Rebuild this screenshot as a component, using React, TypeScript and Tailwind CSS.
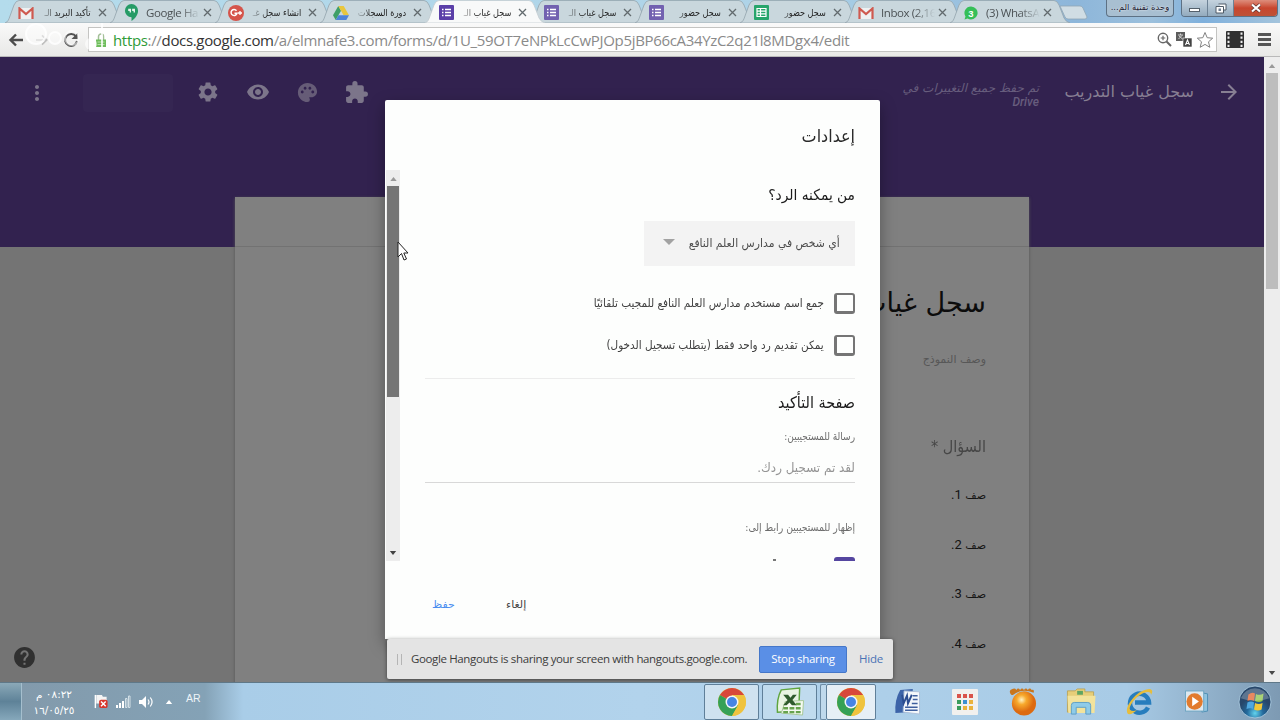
import type { ReactNode } from "react";
import {
  MdArrowForward,
  MdExtension,
  MdHelp,
  MdMoreVert,
  MdPalette,
  MdSettings,
  MdVisibility,
} from "react-icons/md";

interface TabItem {
  title: string;
  icon: ReactNode;
  rtl?: boolean;
  active?: boolean;
}

const GmailIcon = () => (
  <svg viewBox="0 0 16 12" className="h-3 w-4">
    <path d="M1 1h14v11H1z" fill="#eef1f2" />
    <path d="M1.5 12V1.5L8 7l6.5-5.5V12" fill="none" stroke="#cf5a50" strokeWidth="2.2" />
  </svg>
);

const HangoutsIcon = () => (
  <svg viewBox="0 0 16 18" className="h-[17px] w-[15px]">
    <path d="M8 0a7 7 0 0 1 7 7c0 5-4 9-7 11v-4A7 7 0 0 1 8 0z" fill="#269b66" />
    <path d="M4.5 5h3v4H6V7.500H4.500zM8.700 5h3v4h-1.500V7.500H8.700z" fill="#e8f5ee" />
  </svg>
);

const PlusIcon = () => (
  <svg viewBox="0 0 16 16" className="h-4 w-4">
    <circle cx="8" cy="8" r="8" fill="#d5544a" />
    <path d="M8.500 5.700A3 3 0 1 0 9 8.300H6.500" fill="none" stroke="#fff" strokeWidth="1.500" />
    <path d="M12 6v4M10 8h4" stroke="#fff" strokeWidth="1.300" />
  </svg>
);

const DriveIcon = () => (
  <svg viewBox="0 0 16 14" className="h-[14px] w-4">
    <path d="M5.300 0 0 9.300 2.700 14 8 4.700z" fill="#3f9f68" />
    <path d="M5.300 0h5.400L16 9.300h-5.400z" fill="#e9c63c" />
    <path d="M5.400 9.300H16L13.300 14H2.700z" fill="#4e83d8" />
  </svg>
);

const FormIcon = ({ active }: { active?: boolean }) => (
  <svg viewBox="0 0 15 15" className="h-[15px] w-[15px]">
    <rect width="15" height="15" rx="1" fill={active ? "#5b3fa8" : "#7261b0"} />
    <path d="M3 4.500h1.500M3 7.500h1.500M3 10.500h1.500M6 4.500h6M6 7.500h6M6 10.500h6" stroke="#fff" strokeWidth="1.500" />
  </svg>
);

const SheetIcon = () => (
  <svg viewBox="0 0 15 15" className="h-[15px] w-[15px]">
    <rect width="15" height="15" rx="1" fill="#27a56b" />
    <path d="M3 3.500h9v8H3zM3 6.200h9M3 8.900h9M6.500 3.500v8" fill="none" stroke="#fff" strokeWidth="1.200" />
  </svg>
);

const WhatsIcon = () => (
  <svg viewBox="0 0 14 14" className="h-[14px] w-[14px]">
    <path d="M7 .5A6.500 6.500 0 1 1 3.600 12.500L.5 13.500l1-3A6.500 6.500 0 0 1 7 .5z" fill="#35bf58" />
    <text x="7" y="10.500" textAnchor="middle" fontSize="9.500" fontWeight="700" fill="#fff" fontFamily="Liberation Sans">3</text>
  </svg>
);

const tabs: TabItem[] = [
  { title: "تأكيد البريد الـ", icon: <GmailIcon />, rtl: true },
  { title: "Google Ha", icon: <HangoutsIcon /> },
  { title: "انشاء سجل غـ", icon: <PlusIcon />, rtl: true },
  { title: "دورة السجلات", icon: <DriveIcon />, rtl: true },
  { title: "سجل غياب الـ", icon: <FormIcon active />, rtl: true, active: true },
  { title: "سجل غياب الـ", icon: <FormIcon />, rtl: true },
  { title: "سجل حضور", icon: <FormIcon />, rtl: true },
  { title: "سجل حضور", icon: <SheetIcon />, rtl: true },
  { title: "Inbox (2,16", icon: <GmailIcon /> },
  { title: "(3) WhatsA", icon: <WhatsIcon /> },
];

const Tab = ({ title, icon, rtl, active }: TabItem) => (
  <div className={active ? "relative z-10 h-[23px] w-[105px] shrink-0" : "relative h-[23px] w-[105px] shrink-0"}>
    <svg viewBox="0 0 120 23" className="absolute top-0 left-0 h-[23px] w-[120px]">
      <path
        d="M0 23C3 22 4 19 5 16L9 5Q11 .5 14 .5H104Q107 .5 109 5L114 18Q116 22 120 23z"
        fill={active ? "#f8f9f9" : "#c9d7dd"}
        stroke={active ? "#c3ccd0" : "#94a5ad"}
        strokeWidth="0.8"
      />
    </svg>
    <div className="relative flex h-[23px] items-center pt-[2px] pl-[13px]">
      <span className="flex w-4 shrink-0 justify-center">{icon}</span>
      {rtl ? (
        <div
          dir="rtl"
          className="ml-[5px] w-[52px] font-['DejaVu_Sans'] text-[9.500px] leading-[18px] whitespace-nowrap text-[#1d1d1d] [mask-image:linear-gradient(to_right,transparent,black_18px)]"
        >
          <div className="w-max origin-right scale-x-[0.86] font-medium">{title}</div>
        </div>
      ) : (
        <div className="ml-[7px] w-[54px] font-['Open_Sans'] text-[11.500px] leading-[18px] tracking-[-0.400px] whitespace-nowrap text-[#4c5255] [mask-image:linear-gradient(to_left,transparent,black_20px)]">
          {title}
        </div>
      )}
      <svg viewBox="0 0 9 9" className={rtl ? "ml-[7px] h-[9px] w-[9px] shrink-0" : "ml-[3px] h-[9px] w-[9px] shrink-0"}>
        <path d="M1 1l7 7M8 1L1 8" stroke="#626a6e" strokeWidth="1.300" />
      </svg>
    </div>
  </div>
);

const TabStrip = () => (
  <div className="relative flex h-[23px] bg-[linear-gradient(to_right,#b4dcec_0%,#aed3e8_60%,#8db6da_84%,#9cc0dc_90%,#7fb0dc_94%,#a4c4dc_100%)] pl-[5px]">
    {tabs.map((t, i) => (
      <Tab key={i} {...t} />
    ))}
    <svg viewBox="0 0 30 15" className="relative mt-[5px] ml-[4px] h-[15px] w-[30px] shrink-0">
      <path d="M1 1h20q2 0 3 2l4 9q0 2-2 2H9q-2 0-3-2z" fill="#d0dde4" stroke="#8fa6b5" strokeWidth="0.8" />
    </svg>
    <div className="ml-[17px] flex">
      <div
        dir="rtl"
        className="h-[17px] w-[68px] rounded-b-[4px] border border-t-0 border-[#5d7184] bg-[#a8bfd1] text-center font-['DejaVu_Sans'] text-[8.500px] leading-[15px] whitespace-nowrap text-[#223] text-shadow-[0_0_2px_white]"
      >
        وحدة تقنية الم...
      </div>
      <div className="ml-[7px] flex h-[17px] overflow-hidden rounded-b-[4px] border border-t-0 border-[#5d7184]">
        <div className="flex w-[26px] items-center justify-center border-r border-[#6d8295] bg-linear-to-b from-[#c5d3de] to-[#93abbe]">
          <div className="mt-[3px] h-[4px] w-[11px] border border-[#54606b] bg-white" />
        </div>
        <div className="flex w-[26px] items-center justify-center border-r border-[#6d8295] bg-linear-to-b from-[#c5d3de] to-[#93abbe]">
          <svg viewBox="0 0 12 11" className="h-[11px] w-3">
            <path d="M3.500 1h7.500v6H9M1 3.500h7.500V10H1z" fill="#fff" stroke="#4e5a66" />
            <rect x="3.500" y="5.500" width="2.500" height="2.500" fill="#6f8092" />
          </svg>
        </div>
        <div className="flex w-[43px] items-center justify-center bg-linear-to-b from-[#dd8d7c] via-[#c8452e] to-[#bd5236]">
          <svg viewBox="0 0 12 10" className="h-[10px] w-3">
            <path d="M2 1.500l8 7M10 1.500l-8 7" stroke="#5e3430" strokeWidth="3.600" />
            <path d="M2 1.500l8 7M10 1.500l-8 7" stroke="#fff" strokeWidth="2.200" />
          </svg>
        </div>
      </div>
    </div>
  </div>
);

const Toolbar = () => (
  <div className="relative flex h-[34px] items-center border-b border-[#b9b9b9] bg-linear-to-b from-[#f9f9f9] to-[#e9e9e7]">
    <svg viewBox="0 0 16 14" className="ml-[8px] h-[14px] w-4">
      <path d="M15 7H3M8 1.500 2.500 7 8 12.500" fill="none" stroke="#4c4c4c" strokeWidth="2.400" />
    </svg>
    <svg viewBox="0 0 16 14" className="ml-[11px] h-[12px] w-[14px] opacity-40">
      <path d="M1 7h12M8 1.500 13.500 7 8 12.500" fill="none" stroke="#777" strokeWidth="2" />
    </svg>
    <svg viewBox="0 0 16 16" className="ml-[14px] h-4 w-4">
      <path d="M13 4.500A6 6 0 1 0 14 9" fill="none" stroke="#555" strokeWidth="2" />
      <path d="M14.500 1v6h-6z" fill="#555" />
    </svg>
    <div className="ml-[9px] flex h-[25px] w-[1129px] shrink-0 items-center border border-[#c4c4c2] bg-white">
      <svg viewBox="0 0 10 14" className="ml-[7px] h-[14px] w-[10px]">
        <path d="M2.500 7V3.500a2.500 2.500 0 0 1 5 0V7" fill="none" stroke="#a3bf98" strokeWidth="1.500" />
        <rect y="6.500" width="10" height="7.500" fill="#6fbd5d" />
        <path d="M1.500 9h7M1.500 11.500h7" stroke="#b8e3ab" />
      </svg>
      <div className="ml-[7px] w-[760px] font-['Open_Sans'] text-[15px] leading-[22px] tracking-[-0.330px] whitespace-nowrap text-[#8a8a8a]">
        <span className="text-[#2e9b36]">https</span>://<span className="text-[#333]">docs.google.com</span>
        /a/elmnafe3.com/forms/d/1U_59OT7eNPkLcCwPJOp5jBP66cA34YzC2q21l8MDgx4/edit
      </div>
      <div className="mr-[2px] ml-auto flex items-center gap-[4px]">
        <svg viewBox="0 0 15 15" className="h-[15px] w-[15px]">
          <circle cx="6" cy="6" r="4.700" fill="none" stroke="#666" strokeWidth="1.400" />
          <path d="M9.500 9.500 14 14" stroke="#666" strokeWidth="2" />
          <path d="M3.700 6h4.600M6 3.700v4.600" stroke="#666" strokeWidth="1.200" />
        </svg>
        <svg viewBox="0 0 16 15" className="h-[15px] w-4">
          <rect width="9" height="9" fill="#5d5d5d" />
          <path d="M2 3h5M4.500 1.500V3M6 3.500 2.500 7M3 4l3.500 3" fill="none" stroke="#ddd" strokeWidth="0.900" />
          <rect x="7" y="6" width="9" height="9" fill="#444" stroke="#fff" strokeWidth="0.600" />
          <path d="M9.500 13 11.500 8l2 5M10.300 11.500h2.500" fill="none" stroke="#fff" strokeWidth="1.100" />
        </svg>
        <svg viewBox="0 0 18 18" className="h-[18px] w-[18px]">
          <path d="m9 1.500 2.200 5.200 5.500.5-4.200 3.600 1.300 5.500L9 13.400l-4.800 2.900 1.300-5.500L1.300 7.200l5.500-.5z" fill="#fff" stroke="#828282" />
        </svg>
      </div>
    </div>
    <svg viewBox="0 0 18 17" className="ml-[9px] h-[17px] w-[18px]">
      <rect width="18" height="17" rx="1" fill="#303030" />
      <path d="M2.500 1.500v15M15.500 1.500v15" stroke="#eee" strokeWidth="2" strokeDasharray="2.200 1.900" />
    </svg>
    <div className="ml-[14px] flex w-[13px] flex-col gap-[2px]">
      <div className="h-[3px] bg-[#555]" />
      <div className="h-[3px] bg-[#555]" />
      <div className="h-[3px] bg-[#555]" />
    </div>
    {/* faded white recording mark over the navigation buttons */}
    <svg viewBox="0 0 82 30" className="absolute top-0 left-[25px] h-[30px] w-[82px]">
      <circle cx="11" cy="11" r="10" fill="#fff" fillOpacity="0.450" stroke="#fff" strokeOpacity="0.800" strokeWidth="2" />
      <circle cx="30" cy="15" r="6" fill="#fff" fillOpacity="0.400" stroke="#fff" strokeOpacity="0.800" strokeWidth="2" />
      <circle cx="47" cy="15" r="7" fill="none" stroke="#fff" strokeOpacity="0.500" strokeWidth="2" />
      <circle cx="66" cy="21" r="6" fill="#fff" fillOpacity="0.600" />
      <path d="M77 0v24" stroke="#fff" strokeOpacity="0.800" strokeWidth="2" />
    </svg>
  </div>
);

const rows = [1, 2, 3, 4];

const FormPage = () => (
  <div className="flex h-[625px] w-[1264px] flex-col overflow-hidden bg-[#747474]">
    <div className="h-[190px] shrink-0 bg-[#32224f]">
      <div className="flex h-[70px] items-center text-[#7c758a]">
        <MdMoreVert className="mt-px ml-[25px] h-6 w-6" />
        <div className="mt-px ml-[34px] h-[38px] w-[90px] rounded-sm bg-[#352652]" />
        <MdSettings className="ml-[23px] h-6 w-6" />
        <MdVisibility className="ml-[26px] h-6 w-6" />
        <MdPalette className="mt-px ml-[26px] h-[23px] w-[23px] text-[#665c77]" />
        <MdExtension className="mt-px ml-[25px] h-[25px] w-[25px]" />
        <div dir="rtl" className="mt-[5px] ml-auto w-[160px] font-['DejaVu_Sans'] text-[12px] leading-[14px] text-[#675d7d] italic">
          <div className="whitespace-nowrap">تم حفظ جميع التغييرات في</div>
          <div className="font-['Roboto'] text-[12px] leading-[14px] font-medium">Drive</div>
        </div>
        <div dir="rtl" className="ml-[15px] w-[140px] font-['DejaVu_Sans'] text-[16px] leading-6 whitespace-nowrap text-[#877f93]">
          سجل غياب التدريب
        </div>
        <MdArrowForward className="mr-[23px] ml-[23px] h-6 w-6 text-[#877f93]" />
      </div>
    </div>
    <div className="relative -mt-[50px] ml-[235px] h-[490px] w-[794px] shrink-0 bg-[#808080] shadow-[0_1px_3px_#555]">
      <div className="h-[50px] border-b border-[#727272]" />
      <div dir="rtl" className="flex flex-col pr-[43px] font-['DejaVu_Sans']">
        <div className="mt-[28px] h-[60px] text-[27px] leading-[56px] text-[#0c0c0c]">سجل غياب</div>
        <div className="mt-[15px] h-5 text-[11px] leading-5 text-[#575757]">وصف النموذج</div>
        <div className="mt-[62px] h-[30px] origin-right scale-x-[0.9] text-[16px] leading-[30px] text-[#464646]">السؤال *</div>
        <div className="mt-[8px] text-[11px] text-[#141414]">
          {rows.map((n) => (
            <div key={n} className="h-[49.500px] leading-[49.500px]">
              صف <span className="font-['Roboto'] text-[13px]">{n}.</span>
            </div>
          ))}
        </div>
      </div>
    </div>
    <MdHelp className="absolute top-[588px] left-[12px] h-[25px] w-[25px] text-[#303030]" />
  </div>
);

const PageScrollbar = () => (
  <div className="flex w-4 flex-col items-center bg-[#ededed]">
    <svg viewBox="0 0 8 5" className="mt-[7px] h-[4px] w-[8px]">
      <path d="M0 5 4 0l4 5z" fill="#999" />
    </svg>
    <div className="mt-[5px] h-[216px] w-[12px] bg-[#bdbdbd]" />
    <svg viewBox="0 0 8 5" className="mt-auto mb-[7px] h-[4px] w-[8px]">
      <path d="M0 0h8L4 5z" fill="#4a4a4a" />
    </svg>
  </div>
);

const CheckRow = ({ label }: { label: string }) => (
  <div className="flex h-[42px] items-center">
    <div className="h-[21px] w-[21px] shrink-0 rounded-[3px] border-2 border-b-[3px] border-l-[3px] border-[#757575]" />
    <div className="mt-[2px] mr-[10px] w-max origin-right scale-x-[0.91] text-[11.500px] whitespace-nowrap text-[#404040]">{label}</div>
  </div>
);

const SettingsDialog = () => (
  <div className="absolute top-[43px] left-[385px] flex h-[539px] w-[495px] flex-col rounded-t-[2px] bg-[#fdfefd] font-['DejaVu_Sans'] shadow-[0_6px_16px_rgba(0,0,0,0.35)]">
    <div dir="rtl" className="mr-[25px] h-[70px] origin-right scale-x-[0.94] text-[17px] leading-[72px] text-[#2a2a2a]">
      إعدادات
    </div>
    <div className="flex h-[391px] overflow-hidden">
      <div className="ml-px flex w-[14px] flex-col items-center bg-[#ededed]">
        <svg viewBox="0 0 8 5" className="mt-[7px] h-[4px] w-[7px] shrink-0">
          <path d="M0 5 4 0l4 5z" fill="#999" />
        </svg>
        <div className="mt-[5px] h-[211px] w-[12px] shrink-0 bg-[#757575]" />
        <svg viewBox="0 0 8 5" className="mt-auto mb-[6px] h-[4px] w-[8px]">
          <path d="M0 0h8L4 5z" fill="#444" />
        </svg>
      </div>
      <div dir="rtl" className="mr-[25px] ml-[25px] flex-1">
        <div className="h-[51px] origin-right scale-x-[0.92] text-[15px] leading-[50px] text-[#1a1a1a]">من يمكنه الرد؟</div>
        <div className="flex h-[45px] w-[211px] items-center bg-[#f3f3f3] pr-[15px] text-[11.500px] text-[#4c4c4c]">
          <span className="w-max origin-right scale-x-[0.94] whitespace-nowrap">أي شخص في مدارس العلم النافع</span>
          <svg viewBox="0 0 12 6" className="mr-auto mb-[3px] ml-[19px] h-[6px] w-[12px] shrink-0">
            <path d="M0 0h12L6 6z" fill="#a2a2a2" />
          </svg>
        </div>
        <div className="mt-[16px] border-b border-[#ececec] pb-[12px]">
          <CheckRow label="جمع اسم مستخدم مدارس العلم النافع للمجيب تلقائيًا" />
          <CheckRow label="يمكن تقديم رد واحد فقط (يتطلب تسجيل الدخول)" />
        </div>
        <div className="h-[48px] origin-right scale-x-[0.9] text-[16px] leading-[48px] text-[#1a1a1a]">صفحة التأكيد</div>
        <div className="h-5 origin-right scale-x-[0.82] text-[11px] leading-5 text-[#6c6c6c]">رسالة للمستجيبين:</div>
        <div className="h-[36px] border-b border-[#d8d8d8] text-[13px] leading-[42px] text-[#959595]">
          <div className="origin-right scale-x-[0.92]">لقد تم تسجيل ردك.</div>
        </div>
        <div className="mt-[35px] h-5 origin-right scale-x-[0.85] text-[11px] leading-5 text-[#6c6c6c]">إظهار للمستجيبين رابط إلى:</div>
        <div className="mt-[19px] flex h-[21px]">
          <div className="h-[21px] w-[21px] rounded-[3px] bg-[#5546a0]" />
          <div className="mt-[2px] mr-[58px] h-[2px] w-[3px] bg-[#777]" />
        </div>
      </div>
    </div>
    <div dir="ltr" className="flex flex-1 pt-[34px] pl-[47px] text-[11px] leading-5">
      <span className="w-[74px] text-[#4a8df0]">حفظ</span>
      <span className="text-[#444]">إلغاء</span>
    </div>
  </div>
);

const ShareBar = () => (
  <div className="absolute top-[582px] left-[387px] flex h-[40px] w-[506px] items-center rounded-[2px] bg-[#e4e4e4] font-['Open_Sans'] text-[11.500px] whitespace-nowrap text-[#3c3c3c] shadow-[0_1px_4px_rgba(0,0,0,0.5)]">
    <div className="ml-[10px] h-[11px] w-[5px] shrink-0 border-x border-[#b5b5b5]" />
    <span className="ml-[9px] w-[348px] shrink-0 tracking-[-0.370px]">
      Google Hangouts is sharing your screen with hangouts.google.com.
    </span>
    <button className="h-[27px] w-[88px] shrink-0 rounded-[2px] border border-[#4577c9] bg-[#5a8fe6] pb-px tracking-[-0.300px] text-white">
      Stop sharing
    </button>
    <span className="ml-[12px] tracking-[-0.200px] text-[#4a73b5]">Hide</span>
  </div>
);

const Cursor = () => (
  <svg viewBox="0 0 12 20" className="absolute top-[184px] left-[397px] h-[20px] w-3">
    <path d="M1 1v15l3.500-3.500L7 19l2.500-1-2.700-6H11z" fill="#fff" stroke="#222" />
  </svg>
);

const ChromeIcon = () => (
  <svg viewBox="0 0 28 28" className="h-[28px] w-[28px]">
    <circle cx="14" cy="14" r="14" fill="#efc33e" />
    <path d="M14 14 1.900 7A14 14 0 0 1 26.100 7H14z" fill="#d8483a" />
    <path d="M14 14 1.900 7A14 14 0 0 0 14 28l6-10.500z" fill="#35a156" />
    <path d="M14 14V7h12.100A14 14 0 0 1 14 28l6-10.500z" fill="#efc33e" />
    <circle cx="14" cy="14" r="6.500" fill="#f4f6f8" />
    <circle cx="14" cy="14" r="5" fill="#4584e4" />
  </svg>
);

const ExcelIcon = () => (
  <svg viewBox="0 0 30 30" className="h-[29px] w-[30px]">
    <path d="M6 3 25 1l-1 24-22 1Q1 12 6 3z" fill="#e9f4e2" stroke="#5fa53f" strokeWidth="1.500" />
    <path d="m10 15 19-1-1 15-22-2z" fill="#f5faf1" stroke="#a5c795" />
    <path d="M8 8h5l2.500 3L18 8h4l-4.500 5.500L22 19h-5l-2.500-3-3 3H8l4.500-5.500z" fill="#2f5b2c" />
    <path d="M8 22h19M8 26h19M21 17.500h6" stroke="#67a34d" strokeWidth="2.500" strokeDasharray="5 1.500" />
  </svg>
);

const WordIcon = () => (
  <svg viewBox="0 0 28 28" className="h-[27px] w-[28px]">
    <path d="M7 2 20 1l-1 24-17 1Q1 12 7 2z" fill="#3c63a8" />
    <path d="m11 3 16 1v23l-17-2z" fill="#f4f7fb" stroke="#aebfd8" />
    <path d="M20 8h5M20 12h5M19 16h6M12 20h13M12 23h13" stroke="#3f5f9e" strokeWidth="1.600" />
    <path d="m9 7 1.500 9L14 8l1 8 4-9" fill="none" stroke="#2c4d90" strokeWidth="2" />
  </svg>
);

const AppsIcon = () => (
  <svg viewBox="0 0 26 26" className="h-[26px] w-[26px]">
    <rect width="26" height="26" rx="1" fill="#f1f0ee" />
    <path d="M5 5h4v4H5zM11 5h4v4h-4zM17 5h4v4h-4z" fill="#d9534a" />
    <path d="M5 11h4v4H5z" fill="#3a9c5b" />
    <path d="M11 11h4v4h-4z" fill="#3d8fd0" />
    <path d="M17 11h4v4h-4zM17 17h4v4h-4zM11 17h4v4h-4z" fill="#eab23c" />
    <path d="M5 17h4v4H5z" fill="#3a9c5b" />
  </svg>
);

const OrangeIcon = () => (
  <svg viewBox="0 0 30 30" className="h-[29px] w-[30px]">
    <defs>
      <radialGradient id="orange" cx="0.400" cy="0.350">
        <stop offset="0" stopColor="#fff3c4" />
        <stop offset="0.400" stopColor="#f7a92c" />
        <stop offset="1" stopColor="#dd6a10" />
      </radialGradient>
    </defs>
    <circle cx="16" cy="17" r="12.500" fill="url(#orange)" />
    <path d="M2 7Q0 3 4 2q3-1 4 1 2-3 4 0 2-3 4 0 2-3 4 0 2-3 4 0 3-1 2 3Q14 1 5 8q-2 1-3-1z" fill="#c9761d" />
  </svg>
);

const FolderIcon = () => (
  <svg viewBox="0 0 32 30" className="h-[29px] w-[32px]">
    <path d="M2 4h8l2-2h8v3h9v21H2z" fill="#e6ce79" stroke="#b99d4b" strokeWidth="0.800" />
    <path d="M12 4h6v4h-6z" fill="#5fa563" />
    <path d="M2 9h29l-1 18H3z" fill="#f3e39c" />
    <path d="M6 28v-9q0-3 3-3h14q3 0 3 3v9h-5v-7H11v7z" fill="#8fcbe8" stroke="#5d9fc6" />
  </svg>
);

const IeIcon = () => (
  <svg viewBox="0 0 28 28" className="h-[28px] w-[28px]">
    <path d="M23 19.500A9.500 9.500 0 1 1 24 14.500H10" fill="none" stroke="#277dbd" strokeWidth="4.500" />
    <path d="M3 26C-2 21 11 1 25 1q4 1 1 6 0-3-3-3C12 5 3 19 5 22q3 2 7 0-5 5-9 4z" fill="#e7bd3c" />
  </svg>
);

const MediaIcon = () => (
  <svg viewBox="0 0 26 24" className="h-[23px] w-[26px]">
    <path d="M18 3l6 1v18l-6 1z" fill="#8fc3df" stroke="#4f8fb4" />
    <rect x="1" y="1" width="19" height="21" fill="#dde8ef" stroke="#6da5c2" />
    <circle cx="10.500" cy="12" r="8.500" fill="#e27b2d" />
    <path d="m8 7 7 5-7 5z" fill="#fff" />
  </svg>
);

const StartOrb = () => (
  <svg viewBox="0 0 36 36" className="h-[34px] w-[34px]">
    <defs>
      <radialGradient id="orb" cx="0.500" cy="0.850">
        <stop offset="0" stopColor="#62d3ee" />
        <stop offset="0.500" stopColor="#23699c" />
        <stop offset="1" stopColor="#27476b" />
      </radialGradient>
    </defs>
    <circle cx="18" cy="18" r="17" fill="url(#orb)" stroke="#a7c7dc" />
    <path d="M11 10q4-3 7-1l-1 8q-3-2-7 0z" fill="#e2622c" />
    <path d="M19 9.500q4 2 8-.5l-1 8q-4 2-8 0z" fill="#8cc34a" />
    <path d="M10 18.500q4-2 7 0l-1 7q-3-2-7 0z" fill="#4fa8e0" />
    <path d="M18 19q4 2 8 0l-1 7q-4 2-8 0z" fill="#f2c838" />
    <path d="M3 14A16 16 0 0 1 33 14Q18 20 3 14z" fill="#fff" fillOpacity="0.250" />
  </svg>
);

const Taskbar = () => (
  <div className="relative flex h-[38px] items-center border-t border-[#5f7888] bg-[linear-gradient(to_right,#8299aa_0%,#84a2b6_16%,#a9cde8_19%,#b2d3ec_50%,#a8cbe6_88%,#7d9ab3_100%)]">
    <div className="h-full w-[22px] border-r border-[#a5bfce] bg-linear-to-b from-[#8ba9b8] via-[#5e8298] to-[#86a8bb]" />
    <div dir="rtl" className="ml-[7px] w-[50px] text-center font-['DejaVu_Sans'] text-[10.500px] leading-[16px] whitespace-nowrap text-white">
      <div>٠٨:٢٢ م</div>
      <div dir="ltr">١٦/٠٥/٢٥</div>
    </div>
    <svg viewBox="0 0 16 16" className="ml-[14px] h-[15px] w-4">
      <path d="M2 1v14" stroke="#fff" strokeWidth="1.500" />
      <path d="M3 1h6l1 2h4v7H3z" fill="#f4f4f4" />
      <rect x="6" y="6" width="9" height="9" rx="2" fill="#d8352b" />
      <path d="m8 8 5 5M13 8l-5 5" stroke="#fff" strokeWidth="1.500" />
    </svg>
    <svg viewBox="0 0 16 13" className="ml-[6px] h-[13px] w-4">
      <path d="M1 10h2v3H1zM4 8h2v5H4zM7 6h2v7H7z" fill="#fff" />
      <path d="M10.500 3.500h1.500v9h-1.500zM13.500 1H15v11.500h-1.500z" fill="none" stroke="#dbe6ec" strokeWidth="0.900" />
    </svg>
    <svg viewBox="0 0 16 14" className="ml-[7px] h-[14px] w-4">
      <path d="M1 5h3l4-4v12L4 9H1z" fill="#fff" />
      <path d="M10 4.500q2 2.500 0 5M12.300 2.500q3.500 4.500 0 9" fill="none" stroke="#fff" strokeWidth="1.200" />
    </svg>
    <svg viewBox="0 0 8 5" className="ml-[11px] h-[4px] w-[8px]">
      <path d="M0 5 4 0l4 5z" fill="#fff" />
    </svg>
    <div className="mb-[6px] ml-[13px] font-['Liberation_Sans'] text-[10.500px] text-[#eef4f8]">AR</div>
    <div className="mr-[-4px] ml-auto flex h-[37px] items-center">
      <div className="flex h-[36px] w-[55px] items-center justify-center rounded-[2px] border border-[#5f7f99] bg-[#cfe2f0]">
        <ChromeIcon />
      </div>
      <div className="ml-[3px] flex h-[36px] w-[55px] items-center justify-center rounded-[2px] border border-[#5f7f99] bg-[#c0dbee]">
        <ExcelIcon />
      </div>
      <div className="ml-[3px] h-[36px] w-[6px] rounded-l-[2px] border border-r-0 border-[#6d8ca5] bg-[#bfd9ec]" />
      <div className="flex h-[36px] w-[50px] items-center justify-center rounded-[2px] border border-[#5f7f99] bg-[#e6eff6]">
        <ChromeIcon />
      </div>
      <div className="ml-[2px] flex">
        {[<WordIcon />, <AppsIcon />, <OrangeIcon />, <FolderIcon />, <IeIcon />, <MediaIcon />, <StartOrb />].map((icon, i) => (
          <div key={i} className="flex w-[58px] items-center justify-center">
            {icon}
          </div>
        ))}
      </div>
    </div>
  </div>
);

export default function App() {
  return (
    <div className="flex h-[720px] w-[1280px] flex-col overflow-hidden">
      <TabStrip />
      <Toolbar />
      <div className="relative flex h-[625px]">
        <FormPage />
        <PageScrollbar />
        <SettingsDialog />
        <ShareBar />
        <Cursor />
      </div>
      <Taskbar />
    </div>
  );
}
